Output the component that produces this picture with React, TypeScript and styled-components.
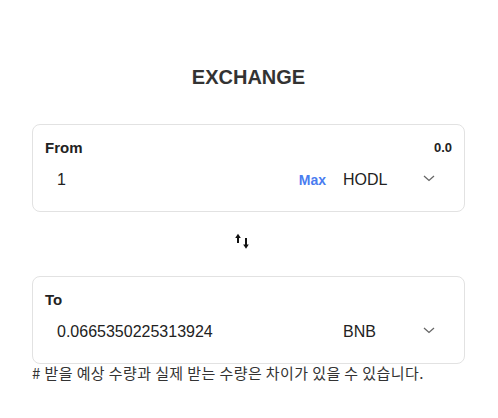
import React from "react";
import styled, { createGlobalStyle } from "styled-components";

const Global = createGlobalStyle`
  html, body { margin: 0; padding: 0; background: #fff; }
  body { font-family: "Liberation Sans", Arial, "Noto Sans CJK KR", sans-serif; color: #212529; }
`;

const Page = styled.div`
  width: 498px;
  padding: 0 33px 0 32px;
  box-sizing: border-box;
  display: flex;
  flex-direction: column;
`;

const Title = styled.h1`
  margin: 65px 0 0;
  height: 24px;
  line-height: 24px;
  font-size: 20px;
  font-weight: 700;
  text-align: center;
  color: #333;
`;

const Card = styled.div<{ $top: number }>`
  margin-top: ${(p) => p.$top}px;
  border: 1px solid #e2e2e2;
  border-radius: 8px;
  padding: 13px 12px 0 12px;
  height: 88px;
  box-sizing: border-box;
  display: flex;
  flex-direction: column;
`;

const Head = styled.div`
  display: flex;
  justify-content: space-between;
  align-items: center;
  height: 20px;
  line-height: 20px;
`;

const Label = styled.span`
  font-size: 15px;
  font-weight: 700;
  color: #222;
`;

const Balance = styled.span`
  font-size: 13px;
  font-weight: 700;
  color: #222;
`;

const Row = styled.div`
  display: flex;
  align-items: center;
  height: 24px;
  line-height: 24px;
  margin-top: 10px;
`;

const Amount = styled.div`
  flex: 1;
  padding-left: 12px;
  font-size: 16px;
  color: #222;
`;

const Max = styled.span`
  font-size: 14px;
  font-weight: 700;
  color: #4a7cf0;
  margin-right: 17px;
`;

const Select = styled.div`
  width: 109px;
  display: flex;
  align-items: center;
  justify-content: space-between;
  font-size: 16px;
  color: #222;
`;

const Chevron = styled.svg`
  width: 12px;
  height: 8px;
  margin-right: 17px;
  margin-top: -4px;
`;

const SwapWrap = styled.div`
  display: flex;
  justify-content: center;
  margin-top: 20px;
  height: 18px;
  padding-right: 16px;
`;

const Note = styled.p`
  margin: 0;
  font-size: 15px;
  line-height: 18px;
  color: #333;
  font-family: "Noto Sans CJK KR", "Liberation Sans", sans-serif;
  letter-spacing: 0.4px;
`;

const ChevronIcon = () => (
  <Chevron viewBox="0 0 12 8">
    <path d="M1 2 L6 6.5 L11 2" fill="none" stroke="#666" strokeWidth="1.3" />
  </Chevron>
);

const SwapIcon = () => (
  <svg width="16" height="18" viewBox="0 0 16 18">
    <path d="M5 5 L5 11" stroke="#111" strokeWidth="2" />
    <path d="M2.2 6 L5 1.8 L7.8 6 Z" fill="#111" />
    <path d="M13 6 L13 13" stroke="#111" strokeWidth="2" />
    <path d="M10.2 12.5 L13 16.8 L15.8 12.5 Z" fill="#111" />
  </svg>
);

export default function App() {
  return (
    <>
      <Global />
      <Page>
        <Title>EXCHANGE</Title>
        <Card $top={35}>
          <Head>
            <Label>From</Label>
            <Balance>0.0</Balance>
          </Head>
          <Row>
            <Amount>1</Amount>
            <Max>Max</Max>
            <Select>
              <span>HODL</span>
              <ChevronIcon />
            </Select>
          </Row>
        </Card>
        <SwapWrap>
          <SwapIcon />
        </SwapWrap>
        <Card $top={26}>
          <Head>
            <Label>To</Label>
          </Head>
          <Row>
            <Amount>0.0665350225313924</Amount>
            <Select>
              <span>BNB</span>
              <ChevronIcon />
            </Select>
          </Row>
        </Card>
        <Note># 받을 예상 수량과 실제 받는 수량은 차이가 있을 수 있습니다.</Note>
      </Page>
    </>
  );
}
